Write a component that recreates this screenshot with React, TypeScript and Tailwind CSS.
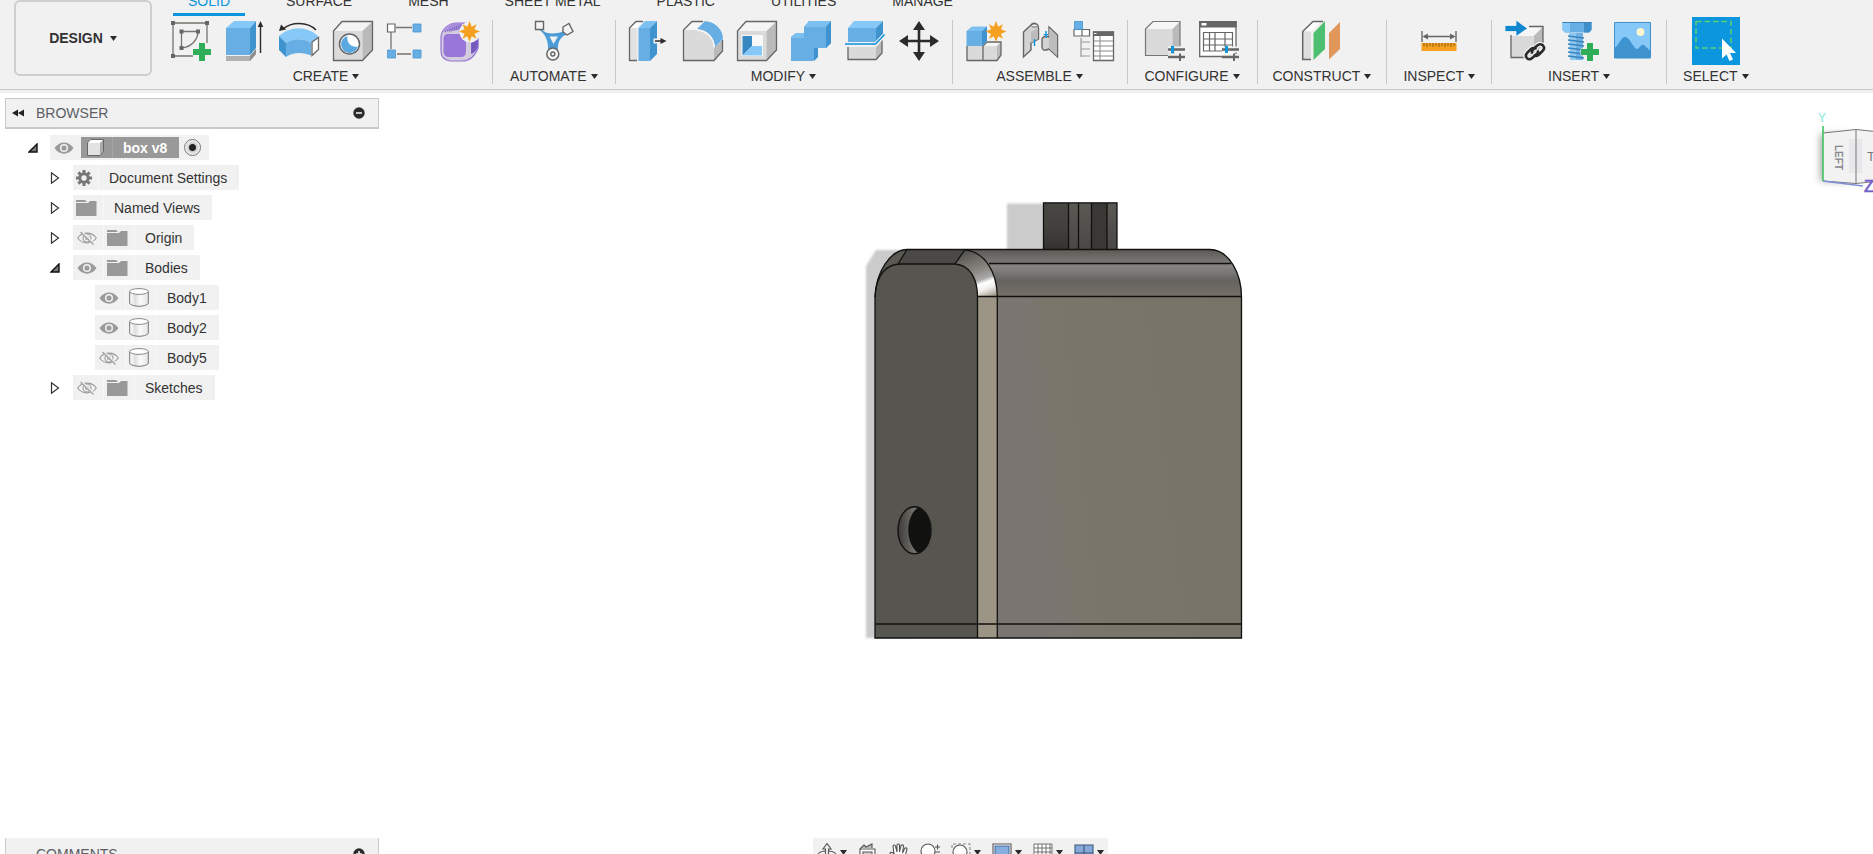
import React from "react";

const FONT = "font-['Liberation_Sans',Arial,sans-serif]";

function Caret({ className = "" }: { className?: string }) {
  return (
    <svg viewBox="0 0 7 5" className={"h-[5px] w-[7px] shrink-0 " + className} aria-hidden="true">
      <path d="M0 0H7L3.5 5Z" fill="#2b2b2b" />
    </svg>
  );
}

function Icon({ children }: { children: React.ReactNode }) {
  return (
    <svg viewBox="0 0 40 40" className="h-10 w-10 overflow-visible" aria-hidden="true">
      {children}
    </svg>
  );
}

const Plus = ({ x, y }: { x: number; y: number }) => (
  <path
    d={`M${x - 3} ${y - 9}h6v6h6v6h-6v6h-6v-6h-6v-6h6z`}
    fill="#2fae57"
    stroke="#f1f1f1"
    strokeWidth="1"
    paintOrder="stroke"
  />
);

const Star = ({ x, y }: { x: number; y: number }) => (
  <path
    transform={`translate(${x} ${y})`}
    d="M0-10.500L2.200-4.800L7-7.200L5-2.200L10.500 0L5 2.200L7 7.200L2.200 4.800L0 10.500L-2.200 4.800L-7 7.200L-5 2.200L-10.500 0L-5-2.200L-7-7.200L-2.200-4.800Z"
    fill="#f6a01f"
  />
);

const Sliders = () => (
  <g>
    <path d="M23 28.500H40M23 36H40" stroke="#f1f1f1" strokeWidth="6" />
    <path d="M23 28.500H40M23 36H40" stroke="#666" strokeWidth="2.400" />
    <path d="M27.500 25V32" stroke="#0b96dd" strokeWidth="3" />
    <path d="M35 32.500V40" stroke="#666" strokeWidth="2" />
  </g>
);

const SketchIcon = () => (
  <Icon>
    <path d="M2 2H36V22M2 2V35H22M10.500 10.500H27C27 18 21 26 10.500 27Z" fill="none" stroke="#77736e" strokeWidth="1.300" />
    <path d="M0 0h4v4h-4zM34 0h4v4h-4zM0 33h4v4h-4zM8.500 8.500h4v4h-4zM25 8.500h4v4h-4zM8.500 25h4v4h-4z" fill="#666" />
    <Plus x={31} y={31} />
  </Icon>
);
const ExtrudeIcon = () => (
  <Icon>
    <path d="M1 35H25L31 28V33L25 40H1Z" fill="#b0b0b0" />
    <path d="M25 35L31 28V33L25 40Z" fill="#8e8e8e" />
    <path d="M1 7H25V34H1Z" fill="#66aee3" />
    <path d="M1 7L9 0H31L25 7Z" fill="#86c9f9" />
    <path d="M25 7L31 0V27L25 34Z" fill="#3f93cf" />
    <path d="M35.500 32V4" stroke="#2b2b2b" strokeWidth="1.400" />
    <path d="M35.500 0L38.300 6H32.700Z" fill="#2b2b2b" />
  </Icon>
);
const BendIcon = () => (
  <Icon>
    <path d="M4 8C12 1 28 0 37 9" fill="none" stroke="#2b2b2b" strokeWidth="1.500" />
    <path d="M0 10L2 3.500L7 8.500Z" fill="#2b2b2b" />
    <path d="M0 15C11 5 28 4 40 16L32 22C25 17 14 17 7 22Z" fill="#86c9f9" />
    <path d="M7 22C14 17 25 17 32 22V34.500C24 31 14 31 7 36Z" fill="#66aee3" />
    <path d="M0 15L7 22V36L0 29Z" fill="#3f93cf" />
    <path d="M33 21L39.500 16.500V28.500L33 34.500Z" fill="#fff" stroke="#666" strokeWidth="1.300" />
  </Icon>
);
const GreyBox = ({ children }: { children?: React.ReactNode }) => (
  <>
    <path d="M.500 10H29.500V39.500H.500Z" fill="#dadada" />
    <path d="M.500 10L9 .500H39.500L29.500 10Z" fill="#f4f4f4" />
    <path d="M29.500 10L39.500 .500V29L29.500 39.500Z" fill="#bababa" />
    <path d="M.500 10L9 .500H39.500V29L29.500 39.500H.500Z" fill="none" stroke="#666" strokeWidth="1.300" />
    {children}
  </>
);
const HoleIcon = () => (
  <Icon>
    <GreyBox />
    <circle cx="16.500" cy="23" r="10" fill="#fff" stroke="#666" strokeWidth="1.500" />
    <path d="M14.500 15A8.600 8.600 0 1 0 25 25.500C19 27 13 22 14.500 15Z" fill="#5aa9e0" />
  </Icon>
);
const PatternIcon = () => (
  <Icon>
    <path d="M9 6.500H25M4 11V28M10 33H24" stroke="#77736e" strokeWidth="1.300" />
    <path d="M.500 3h7.500v8h-7.500z" fill="#fff" stroke="#666" strokeWidth="1.200" />
    <path d="M26 3h8v8h-8zM.500 29h8v8h-8zM26 29h8v8h-8z" fill="#66aee3" stroke="#4a97d0" strokeWidth=".800" />
  </Icon>
);
const FormIcon = () => (
  <Icon>
    <path d="M0 17C0 8 8 2 16 2H28C36 5 38 15 37 27C34 35 29 40 21 40H9C2 39 0 35 0 30Z" fill="#d3ccdf" stroke="#9573d3" strokeWidth="1.200" />
    <path d="M2 11C7 5 12 2 18 2H24L18 9C13 10 8 9 2 11Z" fill="#a78adb" />
    <path d="M7 13H20Q25 13 25 18V30Q25 36 20 36H8Q2.500 36 2.500 30V18Q2.500 13 7 13Z" fill="#9877d8" />
    <path d="M30 22L37 17V26Q34 32 30 33Z" fill="#7d5fc4" />
    <path d="M4 11L20 4M8 11L24 4M32 22V32M34 20V30" stroke="#4f4aa0" strokeWidth=".800" strokeDasharray="1 1" />
    <circle cx="29" cy="11" r="10.500" fill="#f1f1f1" />
    <Star x={28.5} y={10.5} />
  </Icon>
);
const AutomateIcon = () => (
  <Icon>
    <path d="M5 5C9 13 19 15 33 9L34 13C27 15 23 20 24 31H14C15 21 12 13 4 8Z" fill="#4b9bd6" />
    <path d="M15.500 15.500H24L19.500 23Z" fill="#f1f1f1" />
    <path d="M1.500 .500h8v8h-8z" fill="#f4f4f4" stroke="#666" strokeWidth="1.400" />
    <path d="M29 6L35 2.500L39 10.500L33 14L29 11Z" fill="#f4f4f4" stroke="#666" strokeWidth="1.400" />
    <circle cx="18.800" cy="33" r="6" fill="#f4f4f4" stroke="#666" strokeWidth="1.500" />
    <circle cx="18.800" cy="33" r="2" fill="none" stroke="#666" strokeWidth="1.400" />
  </Icon>
);
const PressPullIcon = () => (
  <Icon>
    <path d="M.500 7L7 .500H14L8 7V39.500H.500Z" fill="#e2e2e2" />
    <path d="M.500 7L7 .500H14L8 7Z" fill="#fff" />
    <path d="M14 .500H7L.500 7V39.500H8" fill="none" stroke="#666" strokeWidth="1.300" />
    <path d="M9.500 7H21V40H9.500Z" fill="#66aee3" />
    <path d="M9.500 7L16 0H28L21 7Z" fill="#7cc0f2" />
    <path d="M21 7L28 0V33L21 40Z" fill="#3f93cf" />
    <path d="M24.500 20H33" stroke="#f1f1f1" strokeWidth="5" />
    <path d="M26 20H33" stroke="#2b2b2b" strokeWidth="1.500" />
    <path d="M37.500 20L31.500 17V23Z" fill="#2b2b2b" />
  </Icon>
);
const FilletIcon = () => (
  <Icon>
    <path d="M.500 9L9 .500H22L14 9Z" fill="#f6f6f6" />
    <path d="M.500 9H14C23 10 31 16 31 27V39.500H.500Z" fill="#dadada" />
    <path d="M31 27L39.500 19V30L31 39.500Z" fill="#bababa" />
    <path d="M20 .500H9L.500 9V39.500H31L39.500 30V19" fill="none" stroke="#666" strokeWidth="1.300" />
    <path d="M14 8L22 0C32 1 40 8 40 18L32 26C31 16 25 9 14 8Z" fill="#66aee3" />
    <path d="M14 9C24 10 31 17 31 26" fill="none" stroke="#f6f6f6" strokeWidth="1.300" />
  </Icon>
);
const ShellIcon = () => (
  <Icon>
    <GreyBox>
      <path d="M4.500 14H26V35H4.500Z" fill="#f8f8f8" />
      <path d="M5.500 15H15V25L5.500 34.500Z" fill="#3787c2" />
      <path d="M5.500 34.500L15 25H25V34.500Z" fill="#86c9f9" />
    </GreyBox>
  </Icon>
);
const CombineIcon = () => (
  <Icon>
    <path d="M0 16L5 12H13V6L18 0H40V22L35 27H27V36L22 40H0Z" fill="#66aee3" />
    <path d="M13 6L18 0H40L35 6ZM0 17L5 12H13V17Z" fill="#7cc0f2" />
    <path d="M35 6L40 0V22L35 27ZM23 27H27V36L23 40Z" fill="#3f93cf" />
  </Icon>
);
const SplitIcon = () => (
  <Icon>
    <path d="M3 26H31V38.500H3Z" fill="#dadada" />
    <path d="M31 26L37 19V32L31 38.500Z" fill="#bababa" />
    <path d="M3 26V38.500H31L37 32V19" fill="none" stroke="#666" strokeWidth="1.300" />
    <path d="M3 7H31V21H3Z" fill="#66aee3" />
    <path d="M3 7L9 0H38L31 7Z" fill="#86c9f9" />
    <path d="M31 7L38 0V13L31 21Z" fill="#3f93cf" />
    <path d="M0 23.500H30.500L39.500 14" fill="none" stroke="#f1f1f1" strokeWidth="4" />
    <path d="M0 23H30.500L39.500 13.500" fill="none" stroke="#0b8fd9" strokeWidth="1.500" />
  </Icon>
);
const MoveIcon = () => (
  <Icon>
    <path d="M20 6V34M6 20H34" stroke="#2b2b2b" strokeWidth="2.600" />
    <path d="M20 0L26 9H14ZM20 40L26 31H14ZM0 20L9 14V26ZM40 20L31 14V26Z" fill="#2b2b2b" />
  </Icon>
);
const NewComponentIcon = () => (
  <Icon>
    <path d="M1 25H17V39.500H1ZM17 25H31V39.500H17Z" fill="#dadada" />
    <path d="M17 25L21 21H35L31 25Z" fill="#f6f6f6" />
    <path d="M31 25L35 21V34L31 39.500Z" fill="#bababa" />
    <path d="M1 25V39.500H31L35 34V21H21L17 25V39.500" fill="none" stroke="#666" strokeWidth="1.300" />
    <path d="M.500 10H16V25H.500Z" fill="#66aee3" />
    <path d="M.500 10L6 5.500H21L16 10Z" fill="#7cc0f2" />
    <path d="M16 10L21 5.500V20L16 25Z" fill="#3f93cf" />
    <circle cx="30" cy="10.500" r="9" fill="#f1f1f1" />
    <Star x={30} y={10.5} />
  </Icon>
);
const JointIcon = () => (
  <Icon>
    <path d="M3.500 11L11 4Q13 1 16.500 3Q18.500 4 18.500 7V18L11 22V29L3.500 36Z" fill="#d3d3d3" stroke="#666" strokeWidth="1.400" />
    <path d="M11 11L18 7V18L11 22Z" fill="#bcbcbc" />
    <ellipse cx="14.500" cy="4.500" rx="3" ry="1.600" fill="#f0f0f0" stroke="#666" />
    <path d="M29 6L37.500 14V36L29 28Q22 31 22 26V18Q24 14 29 16Z" fill="#d3d3d3" stroke="#666" strokeWidth="1.400" />
    <path d="M29 7L37 14.500V35L29 27.500Z" fill="#bcbcbc" />
    <path d="M14.500 18V25M26 10V17" stroke="#0b96dd" strokeWidth="1.500" />
    <path d="M23.500 13.500H28" stroke="#0b96dd" />
  </Icon>
);
const BomIcon = () => (
  <Icon>
    <path d="M0 8.500H8V15H0ZM8 8.500H15.500V15H8Z" fill="#fff" stroke="#666" strokeWidth="1.200" />
    <path d="M.500 .500H8.500V8.500H.500Z" fill="#66aee3" stroke="#3f93cf" strokeWidth=".800" />
    <path d="M7 17V36M7 21H16M7 28H16M7 35H16" fill="none" stroke="#999" strokeWidth="1.200" />
    <path d="M19.500 11H39.500V39.500H19.500Z" fill="#fff" stroke="#666" strokeWidth="1.300" />
    <path d="M19 10.500H40V15H19Z" fill="#666" />
    <path d="M26 15V39.500M20 20H39M20 25H39M20 30H39M20 35H39" stroke="#888" />
    <path d="M20 12.500H22.500" stroke="#fff" />
  </Icon>
);
const ConfigureIcon = () => (
  <Icon>
    <path d="M.500 8H27.500V34.500H.500Z" fill="#dadada" />
    <path d="M.500 8L8 .500H35L27.500 8Z" fill="#f6f6f6" />
    <path d="M27.500 8L35 .500V26L27.500 34.500Z" fill="#bababa" />
    <path d="M24 34.500H.500V8L8 .500H35V25" fill="none" stroke="#777" strokeWidth="1.200" />
    <Sliders />
  </Icon>
);
const ConfigTableIcon = () => (
  <Icon>
    <path d="M.700 .700H37V35.500H.700Z" fill="#fff" stroke="#666" strokeWidth="1.300" />
    <path d="M0 0H37.700V6.500H0Z" fill="#666" />
    <path d="M2.500 2H7.500V4.500H2.500Z" fill="#fff" />
    <path d="M4.500 11.500H33.500V30H4.500ZM4.500 18H33.500M4.500 24H33.500M10.500 11.500V30M16 11.500V30M26 11.500V30" fill="none" stroke="#666" strokeWidth="1.200" />
    <Sliders />
  </Icon>
);
const ConstructIcon = () => (
  <Icon>
    <path d="M1 10L11 .500H19L9 10.500V38.500H1Z" fill="#dedede" />
    <path d="M1 10L11 .500H19L9 10.500Z" fill="#fff" />
    <path d="M21 .500H11L.700 10.500V38.500H9" fill="none" stroke="#666" strokeWidth="1.500" />
    <path d="M11.500 12L23 0V28L11.500 39Z" fill="#4dc06d" />
    <path d="M27 12L38 1V28L27 38.500Z" fill="#e0985a" />
    <path d="M13 15L22 5M13 21L22 11M13 27L22 17M13 33L22 23" stroke="#6f9fd8" strokeWidth=".900" strokeDasharray="1 3" />
    <path d="M28 15L37 6M28 21L37 12M28 27L37 18M28 33L37 24" stroke="#f28b6a" strokeWidth=".900" strokeDasharray="1 2" />
  </Icon>
);
const InspectIcon = () => (
  <Icon>
    <path d="M3 10V21M37 10V21M5 15.500H35" stroke="#666" strokeWidth="1.400" />
    <path d="M3.500 15.500L9 12.500V18.500ZM36.500 15.500L31 12.500V18.500Z" fill="#666" />
    <path d="M2.500 22H37.500V30H2.500Z" fill="#f6a01f" />
    <path d="M5 22V25M8 22V26M11 22V25M14 22V26M17 22V25M20 22V26M23 22V25M26 22V26M29 22V25M32 22V26M35 22V25" stroke="#8a5a10" />
  </Icon>
);
const InsertIcon = () => (
  <Icon>
    <path d="M6 15H29V36.500H6Z" fill="#dadada" />
    <path d="M6 15L17 5.500H38L29 15Z" fill="#f6f6f6" />
    <path d="M29 15L38 5.500V24L29 34Z" fill="#bababa" />
    <path d="M20 36.500H6V14M24 5.500H38V22" fill="none" stroke="#666" strokeWidth="1.300" />
    <path d="M0 4.500H11V-1L22.500 7.500L11 15.500V10.500H0Z" fill="#0f86d0" stroke="#f1f1f1" strokeWidth=".800" />
    <g fill="none" strokeLinecap="round">
      <path d="M29.500 27.500L32 24.700Q35 22 37.800 24.300Q40.500 27 37.500 30L34 33.500Q32 35.500 29.500 34.500M31 33L27.500 36.800Q24.500 39.500 22 37.200Q19.500 34.500 22.500 31.500L26 28Q28 26.500 30.500 27.500" stroke="#f1f1f1" strokeWidth="5" />
      <path d="M27 31.500Q26.500 30 29 27.500L32 24.700Q35 22 37.800 24.300Q40.500 27 37.500 30L34 33.500Q32 35.500 29.500 34.500M33 30.500Q33.500 32 31 33.500L27.500 36.800Q24.500 39.500 22 37.200Q19.500 34.500 22.500 31.500L26 28Q28 26.500 30.500 27.500" stroke="#2b2b2b" strokeWidth="2.600" />
    </g>
  </Icon>
);
const FastenerIcon = () => (
  <Icon>
    <path d="M10 12H24V39H11Z" fill="#8fc8f0" />
    <path d="M17 12H24V39H17Z" fill="#72b2e2" />
    <path d="M9 15L25 17M9 19L25 21M9 23L25 25M9 27L25 29M9 31L25 33M9 35L25 37" stroke="#3984bd" strokeWidth="1.300" />
    <path d="M3.500 1H32.500V9L30 11.500H6L3.500 9Z" fill="#66aee3" />
    <path d="M3.500 1H11V11.500H6L3.500 9Z" fill="#86c9f9" />
    <path d="M25 1H32.500V9L30 11.500H25Z" fill="#3f8fca" />
    <path d="M3.500 1.500H32.500" stroke="#3984bd" />
    <Plus x={31} y={31} />
  </Icon>
);
const CanvasIcon = () => (
  <Icon>
    <path d="M1.500 1.500H37.500V37H1.500Z" fill="#86c9f9" />
    <path d="M1.500 27C6 24 8 16 12 16C17 16 20 27 24 28C27 28 27 23 31 24L37.500 30V37H1.500Z" fill="#3f93cf" />
    <path d="M1.500 1.500H37.500V37H1.500Z" fill="none" stroke="#4190c9" />
    <circle cx="27.500" cy="11" r="4" fill="#fbf6cd" />
  </Icon>
);
const SelectIcon = () => (
  <svg viewBox="0 0 48 48" className="h-12 w-12 bg-[#0b96dd]" aria-hidden="true">
    <path d="M4 4.500H39V31H4Z" fill="none" stroke="#5bd071" strokeWidth="1.500" strokeDasharray="5.500 3" />
    <path d="M30 21.500V41.500L34.500 37.500L37.500 44L41 42.500L38 36H44Z" fill="#fff" />
  </svg>
);

type Group = { label: string; pad: string; icons: [string, React.FC][] };

const groups: Group[] = [
  { label: "CREATE", pad: "px-[11px]", icons: [["Create sketch", SketchIcon], ["Extrude", ExtrudeIcon], ["Bend", BendIcon], ["Hole", HoleIcon], ["Pattern", PatternIcon], ["Create form", FormIcon]] },
  { label: "AUTOMATE", pad: "px-[17px]", icons: [["Automated modeling", AutomateIcon]] },
  { label: "MODIFY", pad: "px-[13px]", icons: [["Press pull", PressPullIcon], ["Fillet", FilletIcon], ["Shell", ShellIcon], ["Combine", CombineIcon], ["Split body", SplitIcon], ["Move", MoveIcon]] },
  { label: "ASSEMBLE", pad: "px-[13px]", icons: [["New component", NewComponentIcon], ["Joint", JointIcon], ["Bill of materials", BomIcon]] },
  { label: "CONFIGURE", pad: "px-[17px]", icons: [["Configure", ConfigureIcon], ["Configuration table", ConfigTableIcon]] },
  { label: "CONSTRUCT", pad: "px-[15px]", icons: [["Offset plane", ConstructIcon]] },
  { label: "INSPECT", pad: "px-4", icons: [["Measure", InspectIcon]] },
  { label: "INSERT", pad: "px-[13px]", icons: [["Insert derive", InsertIcon], ["Insert fastener", FastenerIcon], ["Canvas", CanvasIcon]] },
  { label: "SELECT", pad: "px-4", icons: [["Select", SelectIcon]] },
];

const tabs = ["SOLID", "SURFACE", "MESH", "SHEET METAL", "PLASTIC", "UTILITIES", "MANAGE"];

function Toolbar() {
  return (
    <header className="shrink-0 bg-[#f1f1f1] pb-[3px]">
      <div className="flex h-[90px] overflow-hidden border-b border-[#c8c8c8]">
        <button className="ml-[14px] flex h-[76px] w-[138px] shrink-0 items-center justify-center gap-[7px] rounded-md border-2 border-[#cdcdd2] text-sm font-bold">
          DESIGN
          <Caret />
        </button>
        <div className="ml-2 flex min-w-0 flex-1 flex-col">
          <nav className="ml-[13px] flex h-4 items-end gap-[26px] overflow-hidden" aria-label="Workspace tabs">
            {tabs.map((t, i) => (
              <button
                key={t}
                className={
                  "shrink-0 border-b-[3px] px-[15px] pb-1 text-sm leading-4 whitespace-nowrap " +
                  (i === 0 ? "border-[#0b96dd] text-[#0b96dd]" : "border-transparent")
                }
              >
                {t}
              </button>
            ))}
          </nav>
          <div className="flex pt-px">
            {groups.map((g, i) => (
              <section key={g.label} className="flex shrink-0" aria-label={g.label}>
                <div className={"flex flex-col items-center gap-[3px] " + g.pad}>
                  <div className="flex h-12 items-center gap-[14px]">
                    {g.icons.map(([name, I]) => (
                      <button key={name} aria-label={name}>
                        <I />
                      </button>
                    ))}
                  </div>
                  <button className="flex items-center gap-1 text-sm leading-4">
                    {g.label}
                    <Caret />
                  </button>
                </div>
                {i < groups.length - 1 && <div className="mt-[3px] h-16 w-px bg-[#c8c8cc]" />}
              </section>
            ))}
          </div>
        </div>
      </div>
    </header>
  );
}

function Eye({ off }: { off?: boolean }) {
  return off ? (
    <svg viewBox="0 0 20 14" className="h-[14px] w-5" fill="none" stroke="#9b9b9b" strokeWidth="1.100" aria-hidden="true">
      <path d="M.700 7C5 .500 15 .500 19.300 7C15 13.500 5 13.500 .700 7Z" />
      <circle cx="10" cy="7" r="4" />
      <circle cx="10" cy="7" r="1.500" />
      <path d="M4 .500L17 13.500" stroke="#f1f1f1" strokeWidth="2.500" />
      <path d="M3.500 1L16.500 13.500" />
    </svg>
  ) : (
    <svg viewBox="0 0 20 14" className="h-[14px] w-5" aria-hidden="true">
      <path d="M.500 7C5 -.500 15 -.500 19.500 7C15 14.500 5 14.500 .500 7Z" fill="#9b9b9b" />
      <circle cx="10" cy="7" r="3.300" fill="none" stroke="#f1f1f1" strokeWidth="1.500" />
    </svg>
  );
}
const Folder = () => (
  <svg viewBox="0 0 21 16" className="h-4 w-[21px]" aria-hidden="true">
    <path d="M0 0H9L11 2H0ZM0 3H12L14 1H20.500V16H0Z" fill="#999" />
  </svg>
);
const Cylinder = () => (
  <svg viewBox="0 0 20 19" className="h-[19px] w-5" aria-hidden="true">
    <defs>
      <linearGradient id="cyl">
        <stop offset="0" stopColor="#fff" />
        <stop offset=".3" stopColor="#dedee0" />
        <stop offset=".55" stopColor="#fafafa" />
        <stop offset="1" stopColor="#e6e6e6" />
      </linearGradient>
    </defs>
    <path d="M.700 3.500V15.500C4 19.200 16 19.200 19.300 15.500V3.500Z" fill="url(#cyl)" stroke="#777" />
    <ellipse cx="10" cy="3.500" rx="9.300" ry="2.900" fill="#fff" stroke="#888" />
  </svg>
);
const Gear = () => (
  <svg viewBox="-8 -8 16 16" className="h-4 w-4" aria-hidden="true">
    <circle r="4.200" fill="none" stroke="#777" strokeWidth="3" />
    <path d="M0-8V-5M0 8V5M-8 0H-5M8 0H5M-5.600-5.600L-3.500-3.500M5.600 5.600L3.500 3.500M-5.600 5.600L-3.500 3.500M5.600-5.600L3.500-3.500" stroke="#777" strokeWidth="3" />
  </svg>
);

function Disclosure({ open, label }: { open: boolean; label: string }) {
  return (
    <button aria-label={(open ? "Collapse " : "Expand ") + label} className="flex w-[10px] items-center">
      {open ? (
        <svg viewBox="0 0 10 10" className="h-[10px] w-[10px]" aria-hidden="true">
          <path d="M1 9L9 1V9Z" fill="#777" stroke="#111" strokeWidth="1.400" />
        </svg>
      ) : (
        <svg viewBox="0 0 10 12" className="h-3 w-[10px]" aria-hidden="true">
          <path d="M1.500 .800V11.200L8.500 6Z" fill="#fff" stroke="#333" strokeWidth="1.200" />
        </svg>
      )}
    </button>
  );
}

type Item = { name: string; indent: string; open?: boolean; leaf?: boolean; eye?: "on" | "off"; icon: "gear" | "folder" | "body" };

const items: Item[] = [
  { name: "Document Settings", indent: "pl-[50px]", open: false, icon: "gear" },
  { name: "Named Views", indent: "pl-[50px]", open: false, icon: "folder" },
  { name: "Origin", indent: "pl-[50px]", open: false, eye: "off", icon: "folder" },
  { name: "Bodies", indent: "pl-[50px]", open: true, eye: "on", icon: "folder" },
  { name: "Body1", indent: "pl-[95px]", leaf: true, eye: "on", icon: "body" },
  { name: "Body2", indent: "pl-[95px]", leaf: true, eye: "on", icon: "body" },
  { name: "Body5", indent: "pl-[95px]", leaf: true, eye: "off", icon: "body" },
  { name: "Sketches", indent: "pl-[50px]", open: false, eye: "off", icon: "folder" },
];

function Browser() {
  return (
    <aside className="relative w-[379px] pt-[5px]">
      <div className="ml-[5px] flex h-[31px] items-center border border-b-2 border-[#c8c8c8] bg-[#f1f1f1] pr-[13px] pl-[6px]">
        <button aria-label="Collapse panel" className="mr-3">
          <svg viewBox="0 0 12 8" className="h-2 w-3" aria-hidden="true">
            <path d="M0 4L6 .500V7.500ZM6 4L12 .500V7.500Z" fill="#222" />
          </svg>
        </button>
        <h2 className="flex-1 text-sm text-[#5c6064]">BROWSER</h2>
        <button aria-label="Hide panel">
          <svg viewBox="0 0 12 12" className="h-3 w-3" aria-hidden="true">
            <circle cx="6" cy="6" r="5.700" fill="#2b2b2b" />
            <path d="M3 6H9" stroke="#eee" strokeWidth="1.600" />
          </svg>
        </button>
      </div>
      <ul className="flex flex-col gap-[5px] pt-[6px] text-sm">
        <li className="flex h-[25px] items-center pl-7">
          <Disclosure open label="box v8" />
          <div className="ml-3 flex h-full items-center bg-[#f1f1f1]">
            <button aria-label="Toggle visibility of box v8" className="pr-[7px] pl-1">
              <Eye />
            </button>
            <div className="flex h-[21px] items-center bg-[#999] font-bold text-white">
              <span className="flex h-full w-8 items-center justify-center border-r border-[#a6a6a6] pr-[3px]">
                <svg viewBox="0 0 17 17" className="h-[17px] w-[17px]" aria-hidden="true">
                  <path d="M.500 4L4 .500H16.500V12.500L13 16.500H.500Z" fill="#e2e2e2" stroke="#666" />
                  <path d="M1 4L4 1H16L13 4Z" fill="#fff" />
                  <path d="M13 4L16 1V12.500L13 16Z" fill="#aaa" />
                </svg>
              </span>
              <span className="pr-3 pl-[10px]">box v8</span>
            </div>
            <input
              type="radio"
              name="active-component"
              defaultChecked
              aria-label="Activate box v8"
              className="mr-2 ml-[5px] h-[17px] w-[17px] appearance-none rounded-full border border-[#777] bg-[radial-gradient(circle,#222_0,#222_3px,#ccc_4px,#fafafa_8px)]"
            />
          </div>
        </li>
        {items.map((it) => (
          <li key={it.name} className={"flex h-[25px] items-center " + it.indent}>
            {!it.leaf && (
              <span className="mr-[13px] flex">
                <Disclosure open={!!it.open} label={it.name} />
              </span>
            )}
            <div className="flex h-full items-center bg-[#f1f1f1]">
              {it.eye && (
                <button aria-label={"Toggle visibility of " + it.name} className="flex h-full w-[31px] items-center border-r border-[#f7f7f7] pl-1">
                  <Eye off={it.eye === "off"} />
                </button>
              )}
              <span className={"flex h-full items-center border-r border-[#f7f7f7] pl-[3px] " + (it.icon === "gear" ? "w-[26px]" : "w-[31px]")}>
                {it.icon === "gear" ? <Gear /> : it.icon === "folder" ? <Folder /> : <Cylinder />}
              </span>
              <span className="pr-3 pl-[10px]">{it.name}</span>
            </div>
          </li>
        ))}
      </ul>
    </aside>
  );
}

function Model() {
  return (
    <svg viewBox="860 195 390 455" className="absolute top-[102px] left-[860px] h-[455px] w-[390px]" role="img" aria-label="Box model">
      <defs>
        <filter id="soft" x="-10%" y="-10%" width="120%" height="120%">
          <feGaussianBlur stdDeviation="1.2" />
        </filter>
        <linearGradient id="fillet" x1="0" y1="0" x2="0" y2="1">
          <stop offset="0" stopColor="#5c5955" />
          <stop offset=".28" stopColor="#7b7975" />
          <stop offset=".36" stopColor="#868581" />
          <stop offset=".5" stopColor="#777672" />
          <stop offset=".66" stopColor="#64635f" />
          <stop offset="1" stopColor="#777268" />
        </linearGradient>
        <linearGradient id="side" gradientUnits="userSpaceOnUse" x1="997" y1="460" x2="1241" y2="430">
          <stop offset="0" stopColor="#7a7571" />
          <stop offset=".2" stopColor="#7b7670" />
          <stop offset=".26" stopColor="#7a766b" />
          <stop offset="1" stopColor="#777368" />
        </linearGradient>
        <linearGradient id="corner" gradientUnits="userSpaceOnUse" x1="966" y1="250" x2="984" y2="300">
          <stop offset="0" stopColor="#514f4b" />
          <stop offset=".45" stopColor="#8d8a85" />
          <stop offset=".62" stopColor="#aaa" />
          <stop offset=".7" stopColor="#fff" />
          <stop offset=".82" stopColor="#efedea" />
          <stop offset="1" stopColor="#9c9485" />
        </linearGradient>
        <linearGradient id="knob" x1="0" y1="0" x2="0" y2="1">
          <stop offset="0" stopColor="#5b5954" />
          <stop offset="1" stopColor="#494845" />
        </linearGradient>
        <linearGradient id="knobDark" x1="0" y1="0" x2="0" y2="1">
          <stop offset="0" stopColor="#484742" />
          <stop offset=".5" stopColor="#42413e" />
          <stop offset="1" stopColor="#343331" />
        </linearGradient>
        <linearGradient id="bore">
          <stop offset="0" stopColor="#3c3b38" />
          <stop offset=".5" stopColor="#73716b" />
        </linearGradient>
      </defs>
      <path d="M1007 203.500H1045V250H1007ZM866 638V266L876 250H910V638Z" fill="#cbcbcb" filter="url(#soft)" />
      <path d="M875 638V297C876 272 890 250 907 249.500H1210C1230 250 1241.500 275 1241.500 297V638Z" fill="#565550" />
      <path d="M965 249.500H1210C1230 250 1241.500 275 1241.500 297H990Z" fill="url(#fillet)" />
      <path d="M997 296.500H1241.500V638H997Z" fill="url(#side)" />
      <path d="M977.500 296.500H997.300V638H977.500Z" fill="#9c9485" />
      <path d="M955 264L965 249.800C985 252 997 272 997.300 296.500H977.500C977 275 970 265 955 264Z" fill="url(#corner)" />
      <path d="M898 264L907 249.500H965L955 264Z" fill="#4a4945" />
      <path d="M875 297C878 271 890 251 907 249.500L898 264C885 266 877 277 875 297Z" fill="#5b5954" />
      <path d="M1043.500 202.800H1068.500V249.500H1043.500Z" fill="url(#knobDark)" />
      <path d="M1068.500 202.800H1091.500V249.500H1068.500ZM1107 202.800H1117V249.500H1107Z" fill="url(#knob)" />
      <path d="M1091.500 202.800H1107V249.500H1091.500Z" fill="#393835" />
      <g fill="none" stroke="#11110f" strokeWidth="1.300">
        <path d="M1043.500 249.500V202.800H1117V249.500M1068.500 203V249M1078.500 203V249M1091.500 203V249M1107 203V249" />
        <path d="M875 638V297C876 272 890 250 907 249.500H1210C1230 250 1241.500 275 1241.500 297V638Z" />
        <path d="M875 297C876 275 886 264 901 264H955C970 265 977.500 279 977.500 297V638" />
        <path d="M965 249.800C985 252 997 272 997.300 296.500V638M898 264L907 249.500M955 264L965 249.500" />
        <path d="M989 263.500H1231M977.500 296.500H1241.500" />
        <path d="M875 624H1241.500" />
      </g>
      <ellipse cx="914.500" cy="530.300" rx="16.500" ry="23.500" fill="url(#bore)" />
      <path d="M918 507.500C905 517 905 543 918 553C935 548 935 513 918 507.500Z" fill="#11110f" />
      <ellipse cx="914.500" cy="530.300" rx="16.500" ry="23.500" fill="none" stroke="#11110f" strokeWidth="1.400" />
    </svg>
  );
}

function ViewCube() {
  return (
    <svg viewBox="1807 107 66 90" className="absolute top-[14px] right-0 h-[90px] w-[66px]" role="img" aria-label="View cube">
      <defs>
        <filter id="glow" x="-30%" y="-30%" width="160%" height="160%">
          <feGaussianBlur stdDeviation="3.500" />
        </filter>
      </defs>
      <path d="M1820 134H1850V182L1820 181Z" fill="#aaa" filter="url(#glow)" />
      <path d="M1823 133L1856 129L1880 131V181L1856 183L1823 181Z" fill="#f2f2f3" />
      <path d="M1849 139H1862V173H1849Z" fill="#e8e8ea" />
      <path d="M1823 133L1856 129.500L1880 132M1856 129.500V183.500M1823 181L1856 183.500L1880 181" fill="none" stroke="#77777a" />
      <path d="M1823 126V181" stroke="#3cc65f" strokeWidth="1.600" />
      <path d="M1823 181L1863 186" stroke="#7d8fd6" strokeWidth="1.600" />
      <text x="1818" y="122" fontSize="12" fontWeight="700" fill="#a5efe4">Y</text>
      <text x="1864" y="192" fontSize="16" fill="#7160c8" stroke="#7160c8" strokeWidth=".600">Z</text>
      <text transform="translate(1834.500 145) rotate(90)" fontSize="10" fontWeight="700" fill="#88888b">LEFT</text>
      <text x="1867" y="161" fontSize="13" fill="#77777b">TO</text>
    </svg>
  );
}

const navTools: { name: string; menu?: boolean; art: React.ReactNode }[] = [
  { name: "Orbit", menu: true, art: <path d="M8.500 17V6H6L10 .500L14 6H11.500V17M8 8C-1 9 -1 15 8 15M12 8C21 9 21 15 12 15" /> },
  { name: "Look at", art: <><path d="M2 6H17V18H2Z" fill="#fff" /><path d="M5 9H14V14H5Z" fill="#d0d0d0" /><path d="M2 6L6 2L8 4L14 1V5" fill="#bbb" /></> },
  { name: "Pan", art: <path d="M5 18L1 10Q2 8 5 11L4 3Q5 1 6.500 3L8 9V2Q9.500 0 10.500 2V9L12 2.500Q14 1 14.500 3L13.500 10L16 5Q18 4.500 18 6L15 18" fill="#fff" /> },
  { name: "Zoom", art: <><circle cx="8" cy="8" r="7" fill="#fff" /><path d="M3 14L1 18M15 4H20M17.500 1.500V6.500M15 9H20" /></> },
  { name: "Fit", menu: true, art: <><path d="M1 5V1H19V16" strokeDasharray="3 2" stroke="#888" /><circle cx="9" cy="9" r="7" fill="#fff" /></> },
  { name: "Display settings", menu: true, art: <><path d="M1 1H19V16H1Z" fill="#fff" /><path d="M3 3H17V14H3Z" fill="#87aee0" stroke="#486d9f" /></> },
  { name: "Grid and snaps", menu: true, art: <path d="M1 1H19V16H1ZM1 5H19M1 9H19M1 13H19M5 1V16M9 1V16M13 1V16M17 1V16" fill="#fff" strokeWidth=".800" /> },
  { name: "Viewports", menu: true, art: <path d="M1 2H10V10H1ZM10 2H19V10H10ZM1 10H10V17H1ZM10 10H19V17H10Z" fill="#86a9da" stroke="#3d5679" /> },
];

function BottomBar() {
  return (
    <footer className="flex h-4 shrink-0 items-start overflow-hidden">
      <section className="ml-[5px] flex h-[31px] w-[374px] shrink-0 items-center border-x border-[#c8c8c8] bg-[#f1f1f1] pr-[13px] pl-[30px]">
        <h2 className="flex-1 text-sm text-[#5c6064]">COMMENTS</h2>
        <button aria-label="Show comments">
          <svg viewBox="0 0 12 12" className="h-3 w-3" aria-hidden="true">
            <circle cx="6" cy="6" r="5.700" fill="#2b2b2b" />
            <path d="M3 6H9M6 3V9" stroke="#eee" strokeWidth="1.600" />
          </svg>
        </button>
      </section>
      <div className="ml-[434px] flex h-8 shrink-0 items-start gap-[11px] bg-[#f1f1f1] px-1 pt-[5px]">
        {navTools.map((t) => (
          <button key={t.name} aria-label={t.name} className="flex items-center gap-[3px]">
            <svg viewBox="0 0 20 18" className="h-[18px] w-5" fill="none" stroke="#555" strokeWidth="1.100" aria-hidden="true">
              {t.art}
            </svg>
            {t.menu && <Caret />}
          </button>
        ))}
      </div>
    </footer>
  );
}

export default function App() {
  return (
    <div className={"flex h-screen flex-col overflow-hidden bg-white text-[#333] " + FONT}>
      <Toolbar />
      <main className="relative min-h-0 flex-1">
        <Model />
        <ViewCube />
        <Browser />
      </main>
      <BottomBar />
    </div>
  );
}
